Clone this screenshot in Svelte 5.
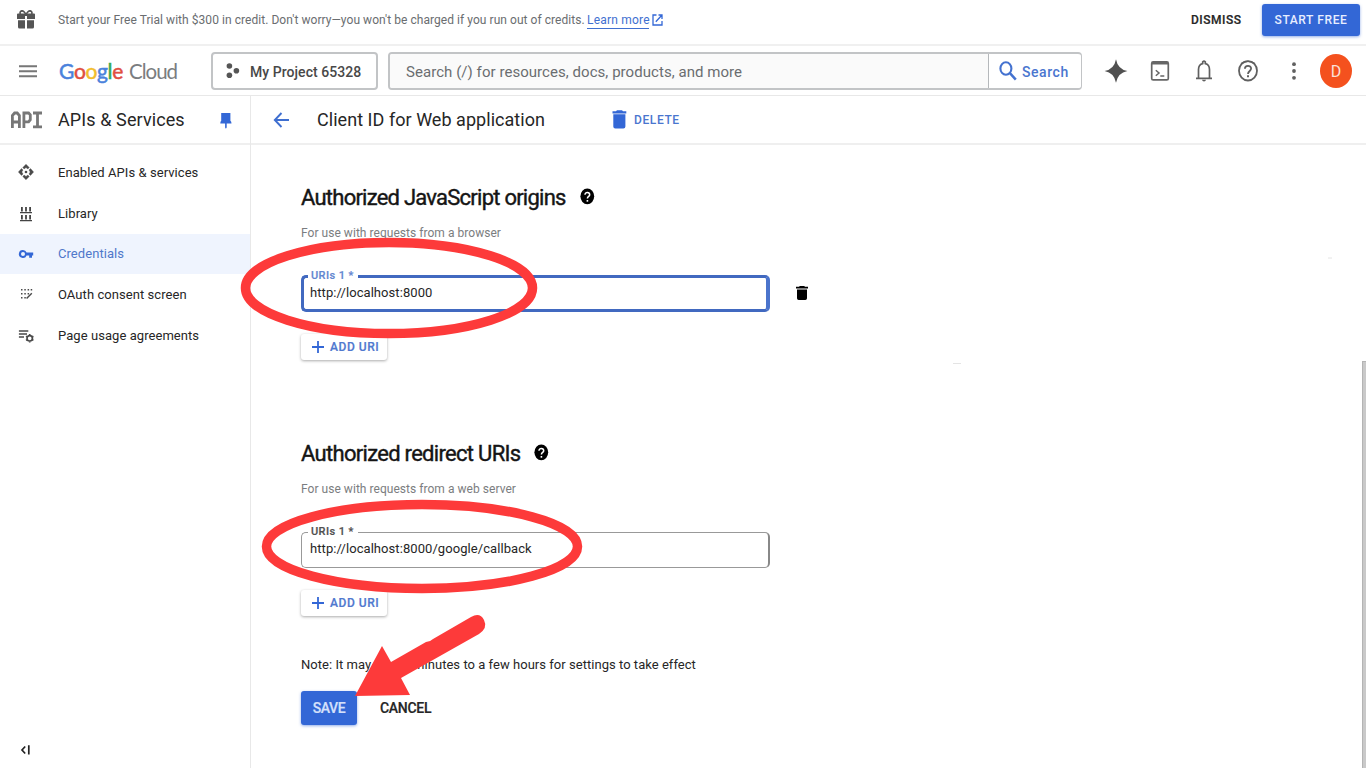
<script>
  const nav = [
    { label: 'Enabled APIs & services', icon: 'api', height: 42 },
    { label: 'Library', icon: 'library', height: 41 },
    { label: 'Credentials', icon: 'key', height: 40, active: true },
    { label: 'OAuth consent screen', icon: 'consent', height: 40 },
    { label: 'Page usage agreements', icon: 'agreements', height: 43 }
  ];
</script>

{#snippet help()}
  <svg class="help" width="15" height="17" viewBox="0 0 15 17">
    <ellipse cx="7.3" cy="8.3" rx="6.9" ry="7.9" fill="#000" />
    <path d="M5 6.7C5 3.6 9.7 3.7 9.7 6.7C9.7 8.4 7.4 8.4 7.4 10.5" fill="none" stroke="#fff" stroke-width="1.5" />
    <rect x="6.6" y="12" width="1.6" height="1.7" fill="#fff" />
  </svg>
{/snippet}

{#snippet addButton()}
  <button class="add">
    <svg width="14" height="14" viewBox="0 0 14 14"><path d="M7 1V13M1 7H13" stroke="#3367d6" stroke-width="1.8" /></svg>
    <span>ADD URI</span>
  </button>
{/snippet}

<div class="page">
  <div class="banner">
    <svg class="gift" width="18" height="19" viewBox="0 0 18 19" fill="#555">
      <path d="M1 3.5H17Q18 3.5 18 4.5V9H10V6H8V9H0V4.5Q0 3.5 1 3.5Z" />
      <path d="M1 10.2H8V18.5H2.5Q1 18.5 1 17ZM10 10.2H17V17Q17 18.5 15.5 18.5H10Z" />
      <path d="M9 4.2L6.8 1.6Q4.9 0 3.4 1.7Q2.7 3 3.4 4.2M9 4.2L11.2 1.6Q13.1 0 14.6 1.7Q15.3 3 14.6 4.2" fill="none" stroke="#555" stroke-width="1.6" />
    </svg>
    <p>Start your Free Trial with $300 in credit. Don't worry—you won't be charged if you run out of credits.</p>
    <a href="#learn">Learn more</a>
    <svg class="ext" width="11" height="12" viewBox="0 0 11 12" fill="none" stroke="#3367d6" stroke-width="1.3"><path d="M4.5 1H1V11H10V7M6.5 1H10V5M10 1L3.8 7.8" /></svg>
    <button class="dismiss">DISMISS</button>
    <button class="start">START FREE</button>
  </div>

  <header>
    <svg class="menu" width="18" height="14" viewBox="0 0 18 14"><path d="M0 2.2H18M0 7.2H18M0 12.2H18" stroke="#777" stroke-width="2" /></svg>
    <div class="logo"><span class="google"><b class="bl">G</b><b class="rd">o</b><b class="yl">o</b><b class="bl">g</b><b class="gr">l</b><b class="rd">e</b></span><span class="cloud">Cloud</span></div>
    <button class="project">
      <svg width="14" height="16" viewBox="0 0 14 16" fill="#555"><circle cx="3.4" cy="3" r="2.8" /><circle cx="3.4" cy="12.3" r="2.8" /><circle cx="10.4" cy="7.7" r="2.8" /></svg>
      <span>My Project 65328</span>
    </button>
    <div class="search">
      <div class="field">Search (/) for resources, docs, products, and more</div>
      <button>
        <svg width="18" height="20" viewBox="0 0 18 20" fill="none" stroke="#4472d0" stroke-width="2.1"><ellipse cx="6.9" cy="7.5" rx="5.5" ry="6.2" /><path d="M10.9 12.1L16.8 18.6" stroke-width="2.5" /></svg>
        <span>Search</span>
      </button>
    </div>
    <div class="tools">
      <svg width="24" height="24" viewBox="0 0 24 24"><path d="M12 .2Q13.8 10.2 23.4 12Q13.8 13.8 12 23.8Q10.2 13.8 .6 12Q10.2 10.2 12 .2Z" fill="#505050" /></svg>
      <svg width="20" height="22" viewBox="0 0 20 22" fill="none" stroke="#666" stroke-width="1.7"><rect x="1.7" y="1.9" width="16.6" height="18" rx="1.5" /><path d="M2 3.2H18" stroke-width="2.6" /><path d="M5.8 10.3L9 13L5.8 15.7M10.3 15.9H14.3" stroke-width="1.5" /></svg>
      <svg width="18" height="24" viewBox="0 0 18 24" fill="none" stroke="#606060" stroke-width="1.7"><path d="M1 19.4H17M3.5 19V10.5Q3.6 5.4 7.7 4.6V2.8Q9 1.6 10.3 2.8V4.6Q14.4 5.4 14.5 10.5V19" /><path d="M7 20.8H11Q10.7 22.6 9 22.6T7 20.8Z" fill="#606060" stroke="none" /></svg>
      <svg width="22" height="24" viewBox="0 0 22 24" fill="none" stroke="#606060" stroke-width="1.8"><ellipse cx="11" cy="11.8" rx="9" ry="9.7" /><path d="M4 4.4Q11 .4 18 4.4" stroke-width="1.2" /><path d="M7.9 9.7C7.9 5.9 14.1 5.9 14.1 9.6C14.1 12 11 12 11 15" /><path d="M11 16.2V18.2" stroke-width="2" /></svg>
      <svg width="6" height="20" viewBox="0 0 6 20" fill="#606060"><circle cx="3" cy="3.2" r="1.9" /><circle cx="3" cy="10" r="1.9" /><circle cx="3" cy="16.8" r="1.9" /></svg>
      <div class="avatar">D</div>
    </div>
  </header>

  <div class="body">
    <aside>
      <div class="product">
        <svg class="apilogo" width="32" height="18" viewBox="0 0 32 18" fill="none" stroke="#777" stroke-width="2.8">
          <path d="M1.4 17V4.5L3.6 2H6.2L8.4 4.5V17M1.4 11H8.4M12.9 17V2H17.6L19.3 3.8V8.7L17.6 10.8H12.9M22 2H31M26.5 2V16M22 15.8H31" />
        </svg>
        <h2>APIs &amp; Services</h2>
        <svg class="pin" width="12" height="16" viewBox="0 0 12 16" fill="#3367d6"><path d="M1.2 0H10.4V7.8Q11.5 8.6 11.5 10.5H.3Q.3 8.6 1.2 7.8ZM5.1 10H6.7V14.5L5.9 15.7L5.1 14.5Z" /></svg>
      </div>
      <nav>
        {#each nav as item}
          <a href="#nav" class:active={item.active} style="height:{item.height}px">
            <svg width="16" height="16" viewBox="0 0 16 16" fill="#4a4a4a">
              {#if item.icon === 'api'}
                <path d="M8 .3L11.2 3.5L9.9 4.9L8 3.6L6.1 4.9L4.8 3.5ZM8 15.7L11.2 12.5L9.9 11.1L8 12.4L6.1 11.1L4.8 12.5ZM.4 8L3.5 4.6L5 6L3.8 8L5 10L3.5 11.4ZM15.6 8L12.5 4.6L11 6L12.2 8L11 10L12.5 11.4Z" stroke="#4a4a4a" stroke-width=".4" /><circle cx="8" cy="8" r="1.3" />
              {:else if item.icon === 'library'}
                <path d="M2 6.7H14M2 14.7H14" fill="none" stroke="#444" stroke-width="1.3" /><path d="M3.9 1V5.6M8 1V5.6M12.1 1V5.6M3.9 9V13.6M8 9V13.6M12.1 9V13.6" fill="none" stroke="#444" stroke-width="1.8" />
              {:else if item.icon === 'key'}
                <path fill-rule="evenodd" d="M5 4A4 4 0 0 1 8.6 6.6H15.2V9.4H14V11.8H11.2V9.4H8.6A4 4 0 1 1 5 4ZM5 6A2 2 0 1 0 5 10A2 2 0 1 0 5 6Z" fill="#3367d6" />
              {:else if item.icon === 'consent'}
                <path d="M3 3h1.5v1.5H3zM6.3 3h1.5v1.5H6.3zM9.6 3h1.5v1.5H9.6zM12.7 3h1.5v1.5h-1.5zM3 7h1.5v1.5H3zM6.3 7h1.5v1.5H6.3zM9.6 7h1.5v1.5H9.6zM3 11h1.5v1.5H3zM6.3 11h1.5v1.5H6.3z" />
                <path d="M13.8 7.2L8.6 12.5" stroke="#4a4a4a" stroke-width="1.4" />
              {:else}
                <path d="M.9 2.9H10.3M.9 6H9M.9 9.1H6" stroke="#4a4a4a" stroke-width="1.5" />
                <circle cx="11.7" cy="10.3" r="2.7" fill="none" stroke="#4a4a4a" stroke-width="1.7" />
                <path d="M11.7 6V7.2M11.7 13.4V14.6M8 8.2L9 8.8M14.4 11.8L15.4 12.4M8 12.4L9 11.8M14.4 8.8L15.4 8.2" stroke="#4a4a4a" stroke-width="1.6" />
              {/if}
            </svg>
            <span>{item.label}</span>
          </a>
        {/each}
      </nav>
      <svg class="collapse" width="12" height="12" viewBox="0 0 12 12" fill="none" stroke="#222" stroke-width="1.7"><path d="M5.2 2.5L2 6L5.2 9.5M8.8 1.3V10.5" /></svg>
    </aside>

    <main>
      <div class="titlebar">
        <svg class="back" width="17" height="16" viewBox="0 0 17 16" fill="none" stroke="#3f6fd0" stroke-width="1.9"><path d="M16 8H2M8.5 1L1.8 8L8.5 15" /></svg>
        <h1>Client ID for Web application</h1>
        <button class="delete">
          <svg width="15" height="19" viewBox="0 0 15 19" fill="#3367d6"><path d="M5 .3H10L11 1.3H14.3V3.4H.5V1.3H4ZM1.3 4.3H13.4V16.5Q13.4 18.5 11.4 18.5H3.3Q1.3 18.5 1.3 16.5Z" /></svg>
          <span>DELETE</span>
        </button>
      </div>

      <div class="content">
        <section>
          <h3><span class="origins">Authorized JavaScript origins</span>{@render help()}</h3>
          <p class="hint">For use with requests from a browser</p>
          <div class="row">
            <fieldset class="focused"><legend>URIs 1 *</legend><span>http://localhost:8000</span></fieldset>
            <svg class="trash" width="12" height="14" viewBox="0 0 12 14"><path d="M3.8 0H8.2L9 .8H12V2.5H0V.8H3ZM1 3.5H11V12.3Q11 14 9.3 14H2.7Q1 14 1 12.3Z" /></svg>
          </div>
          {@render addButton()}
        </section>
        <section class="redirects">
          <h3><span>Authorized redirect URIs</span>{@render help()}</h3>
          <p class="hint">For use with requests from a web server</p>
          <div class="row">
            <fieldset><legend>URIs 1 *</legend><span>http://localhost:8000/google/callback</span></fieldset>
          </div>
          {@render addButton()}
        </section>
        <p class="note">Note: It may take 5 minutes to a few hours for settings to take effect</p>
        <div class="actions"><button class="save">SAVE</button><button class="cancel">CANCEL</button></div>
      </div>
    </main>
  </div>

  <div class="scroll"></div>
  <svg class="marks" width="1366" height="768" viewBox="0 0 1366 768">
    <g fill="none" stroke="#fd3a3a" stroke-width="9.5">
      <ellipse cx="389" cy="288" rx="143.5" ry="45.5" />
      <ellipse cx="422" cy="546.5" rx="155.5" ry="42" />
    </g>
    <path d="M355 696L382 646L391 662L426 642Q430 642 433 639L471 617Q480 612 484 620Q488 628 479 634L401 678L410 695Z" fill="#fd3a3a" />
    <path d="M953 363.5H961M1328 258H1332" stroke="#e4e4e4" />
  </svg>
</div>

<style>
  :global(body) { margin: 0; background: #fff; overflow: hidden; }
  .page { position: relative; width: 1366px; height: 768px; overflow: hidden; display: flex; flex-direction: column; font-family: Roboto, sans-serif; color: #262626; white-space: nowrap; }
  .page :global(*) { box-sizing: border-box; }
  p, h1, h2, h3 { margin: 0; font-weight: 400; }
  button { font: inherit; border: 0; margin: 0; padding: 0; background: none; color: inherit; white-space: nowrap; }
  a { text-decoration: none; color: inherit; }
  svg { flex: none; display: block; }

  .banner { height: 46px; flex: none; display: flex; align-items: center; padding: 0 6px 4px 17px; border-bottom: 2px solid #f0f0f0; font-size: 12px; }
  .gift { margin: -2px 23px 0 0; }
  .banner p { color: #6a6d70; width: 527px; letter-spacing: .05px; }
  .banner a { width: 62px; margin-left: 2px; color: #3f6fd0; border-bottom: 1px solid #3f6fd0; line-height: 15px; margin-top: 1px; letter-spacing: .2px; }
  .ext { margin-left: 3px; margin-top: -1px; }
  .dismiss { margin-left: auto; font-weight: 500; width: 52px; text-align: left; letter-spacing: .5px; -webkit-text-stroke: .2px; }
  .start { width: 98px; height: 32px; margin-left: 19px; border-radius: 3px; background: #3367d6; color: #e8eeff; font-weight: 500; letter-spacing: .6px; box-shadow: 0 1px 3px #3367d688; }

  header { height: 50px; flex: none; display: flex; align-items: center; padding: 1px 14px 0 19px; border-bottom: 1px solid #e8e8e8; }
  .logo { display: flex; align-items: baseline; width: 152px; margin-left: 22px; font: 21px/30px Lato, sans-serif; }
  .logo b { font-weight: 400; -webkit-text-stroke: .5px currentColor; }
  .google { width: 70px; letter-spacing: -.35px; }
  .cloud { color: #7a7d80; font-size: 20.5px; letter-spacing: -1px; }
  .bl { color: #4a82dc; } .rd { color: #e04e40; } .yl { color: #f2bd2c; } .gr { color: #34a853; }
  .project { width: 167px; height: 38px; display: flex; align-items: center; border: 2px solid #c2c4c6; border-radius: 4px; padding: 0 0 0 13px; font-size: 14px; font-weight: 500; color: #484848; }
  .project span { margin-left: 10px; letter-spacing: .05px; margin-top: 1px; }
  .search { display: flex; width: 694px; height: 38px; margin-left: 10px; border: 2px solid #c2c4c6; border-right-width: 1px; border-radius: 4px; overflow: hidden; }
  .field { width: 599px; background: #fafafa; border-right: 1px solid #b5b8bb; padding-left: 16px; font-size: 15px; letter-spacing: .05px; line-height: 36px; color: #6a6d70; }
  .search button { display: flex; align-items: center; padding-left: 10px; font-size: 14px; letter-spacing: .55px; font-weight: 500; color: #4a76cf; }
  .search button span { margin-left: 5px; margin-top: 1px; }
  .tools { display: flex; align-items: center; margin-left: 22px; }
  .tools svg:nth-child(2) { margin-left: 22px; }
  .tools svg:nth-child(3) { margin-left: 25px; }
  .tools svg:nth-child(4) { margin-left: 24px; }
  .tools svg:nth-child(5) { margin-left: 32px; }
  .avatar { width: 32px; height: 34px; margin-left: 23px; border-radius: 50%; background: #f4511e; color: #fbe0d8; text-align: center; font-size: 16px; line-height: 36px; }

  .body { flex: 1; min-height: 0; display: flex; }
  aside { width: 251px; flex: none; display: flex; flex-direction: column; border-right: 1px solid #e8e8e8; }
  .product { height: 49px; flex: none; display: flex; align-items: center; padding: 0 0 0 11px; border-bottom: 2px solid #efefef; }
  h2 { width: 147px; margin-left: 15px; font-size: 18px; letter-spacing: .1px; }
  .pin { margin-left: 15px; margin-top: 2px; }
  nav { padding-top: 6px; }
  nav a { display: flex; align-items: center; padding-left: 18px; font-size: 13px; letter-spacing: .06px; }
  nav a:not(.active) { padding-top: 1px; }
  nav a span { margin-left: 24px; margin-top: -1px; }
  nav a svg { margin-top: -1px; }
  .active { background: #eff4fe; color: #5078ca; }
  .collapse { margin: auto 0 12px 20px; }

  main { flex: 1; display: flex; flex-direction: column; }
  .titlebar { height: 49px; flex: none; display: flex; align-items: center; padding: 0 0 0 22px; border-bottom: 2px solid #efefef; }
  h1 { width: 295px; margin-left: 27px; font-size: 18px; letter-spacing: .04px; }
  .delete { display: flex; align-items: center; color: #4a76cf; font-size: 12px; font-weight: 500; letter-spacing: .6px; }
  .delete span { margin-left: 7px; }
  .content { padding: 38px 0 0 50px; }
  h3 { height: 28px; display: flex; align-items: center; font-size: 22px; letter-spacing: -.7px; color: #151515; -webkit-text-stroke: .4px #151515; }
  .origins { letter-spacing: -.76px; }
  .help { margin-left: 14px; margin-top: -1px; }
  .hint { margin-top: 13px; font-size: 12px; line-height: 18px; letter-spacing: .04px; color: #7b7d80; }
  .row { display: flex; align-items: center; height: 43px; margin-top: 27px; }
  fieldset { width: 469px; height: 43px; margin: 0; padding: 0 0 0 8px; border: 1px solid #999; border-right: 2px solid #888; border-radius: 5px; font-size: 13px; letter-spacing: .07px; min-width: 0; }
  fieldset span { display: block; line-height: 20px; margin-top: 0; }
  legend { padding: 0 4px 0 3px; margin-left: -2px; font-size: 11px; line-height: 14px; font-weight: 500; letter-spacing: .4px; color: #505050; -webkit-text-stroke: .2px; }
  .focused { border: 3px solid #4169c0; border-right: 4px solid #4b74cc; padding-left: 6px; }
  .focused legend { color: #6286d0; }
  .trash { margin: 5px 0 0 26px; }
  .add { display: flex; align-items: center; width: 86px; height: 26px; margin-top: 22px; padding-left: 10px; color: #5079cf; font-size: 12px; font-weight: 500; letter-spacing: .55px; -webkit-text-stroke: .2px; border-radius: 3px; box-shadow: 0 1px 3px #0005; }
  .add span { margin-left: 5px; }
  .redirects { margin-top: 79px; }
  .note { margin-top: 39px; font-size: 13px; line-height: 20px; letter-spacing: .035px; }
  .actions { display: flex; align-items: center; margin-top: 16px; }
  .save { width: 56px; height: 34px; border-radius: 3px; background: #3367d6; color: #d5e0fb; font-size: 14px; letter-spacing: -.4px; font-weight: 500; -webkit-text-stroke: .2px; box-shadow: 0 1px 3px #3367d688; }
  .cancel { margin-left: 23px; font-size: 14px; letter-spacing: -.3px; font-weight: 500; -webkit-text-stroke: .2px; }
  .scroll { position: absolute; right: 0; top: 361px; width: 4px; height: 407px; background: #c9c9c9; border-left: 1px solid #b4b4b4; border-top: 1px solid #b4b4b4; }
  .marks { position: absolute; left: 0; top: 0; pointer-events: none; }
</style>
